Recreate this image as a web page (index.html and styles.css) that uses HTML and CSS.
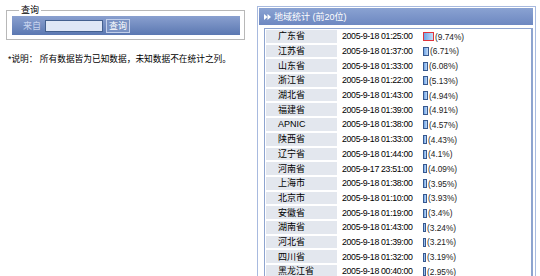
FILE: index.html
```html
<!DOCTYPE html>
<html lang="zh-CN">
<head>
  <meta charset="UTF-8" />
  <title>地域统计</title>
  <link rel="stylesheet" href="styles.css">
</head>
<body>
  <div class="page">
    <div class="side">
      <fieldset class="query">
        <legend>查询</legend>
        <div class="query-bar">
          <span class="query-label">来自</span>
          <input type="text" class="query-input" />
          <button class="query-btn">查询</button>
        </div>
      </fieldset>
      <p class="note">*说明：&nbsp;所有数据皆为已知数据，未知数据不在统计之列。</p>
    </div>

    <div class="panel">
      <div class="panel-head">
        <svg class="head-icon" width="7" height="6" viewBox="0 0 7 6">
          <polygon points="0,0 3.5,3 0,6" fill="#fff"/>
          <polygon points="3.5,0 7,3 3.5,6" fill="#fff"/>
        </svg>
        地域统计 (前20位)
      </div>
      <div class="panel-body">
        <table class="stats" id="stats"></table>
      </div>
    </div>
  </div>

<script>
  const ROWS = [
    ["广东省", "2005-9-18 01:25:00", 11, "9.74%", true],
    ["江苏省", "2005-9-18 01:37:00", 6, "6.71%"],
    ["山东省", "2005-9-18 01:33:00", 5, "6.08%"],
    ["浙江省", "2005-9-18 01:22:00", 5, "5.13%"],
    ["湖北省", "2005-9-18 01:43:00", 5, "4.94%"],
    ["福建省", "2005-9-18 01:39:00", 5, "4.91%"],
    ["APNIC", "2005-9-18 01:38:00", 5, "4.57%"],
    ["陕西省", "2005-9-18 01:33:00", 4, "4.43%"],
    ["辽宁省", "2005-9-18 01:44:00", 4, "4.1%"],
    ["河南省", "2005-9-17 23:51:00", 4, "4.09%"],
    ["上海市", "2005-9-18 01:38:00", 4, "3.95%"],
    ["北京市", "2005-9-18 01:10:00", 4, "3.93%"],
    ["安徽省", "2005-9-18 01:19:00", 4, "3.4%"],
    ["湖南省", "2005-9-18 01:43:00", 3, "3.24%"],
    ["河北省", "2005-9-18 01:39:00", 3, "3.21%"],
    ["四川省", "2005-9-18 01:32:00", 3, "3.19%"],
    ["黑龙江省", "2005-9-18 00:40:00", 3, "2.95%"]
  ];

  const table = document.getElementById("stats");
  ROWS.forEach(([name, time, w, pct, top]) => {
    const tr = document.createElement("tr");
    tr.innerHTML =
      `<td class="c-name">${name}</td>` +
      `<td class="c-time">${time}</td>` +
      `<td class="c-bar"><span class="bar${top ? " bar-top" : ""}" style="width:${w}px"></span>` +
      `<span class="pct">(${pct})</span></td>`;
    table.appendChild(tr);
  });
</script>
</body>
</html>
```

FILE: styles.css
```css
body {
  margin: 0;
  background: #fff;
  color: #000;
  font-family: "Liberation Sans", "Noto Sans CJK SC", sans-serif;
  font-size: 9px;
}

.page {
  display: flex;
  align-items: flex-start;
}

.side {
  width: 251px;
  flex-shrink: 0;
}

/* query box */
.query {
  margin: 6px 0 0 6px;
  width: 239px;
  box-sizing: border-box;
  border: 1px solid #b8b8b8;
  padding: 1px 4px 4px 5px;
}

.query legend {
  padding: 0 2px;
  margin-left: 7px;
  font-size: 9px;
  line-height: 9px;
}

.query-bar {
  display: flex;
  align-items: center;
  height: 19px;
  background: linear-gradient(#8aa0cf, #5b78b2);
}

.query-label {
  color: #c9d5f0;
  margin: 0 4px 0 11px;
}

.query-input {
  width: 58px;
  height: 12px;
  box-sizing: border-box;
  border: 1px solid #44608f;
  background: #dfe7f6;
  padding: 0;
  margin: 0;
}

.query-btn {
  margin-left: 3px;
  height: 14px;
  width: 24px;
  padding: 0;
  border: 1px solid #c3d0ea;
  background: #7a92c3;
  color: #fff;
  font-family: inherit;
  font-size: 9px;
  line-height: 12px;
}

.note {
  margin: 12px 0 0 8px;
  font-size: 8.7px;
  white-space: nowrap;
}

/* stats panel */
.panel {
  margin-top: 6px;
  margin-left: 6px;
  width: 279px;
  height: 300px;
  box-sizing: border-box;
  border: 1px solid #a8badf;
  padding: 1px 2px 0 1px;
}

.panel-head {
  height: 17px;
  display: flex;
  align-items: center;
  gap: 3px;
  padding-left: 5px;
  background: linear-gradient(#8aa2d2, #6d88c1);
  color: #fff;
  font-size: 9px;
}

.head-icon {
  display: block;
}

.panel-body {
  margin: 3px 0 0 5px;
  height: 260px;
  border: 1px solid #8ea4cf;
  border-right-width: 2px;
}

.stats {
  border-collapse: separate;
  border-spacing: 2px 2px;
  margin: -1px 0 0 -1px;
  line-height: 10px;
}

.stats tr {
  height: 12.7px;
}

.stats td {
  padding: 0;
  white-space: nowrap;
}

.c-name {
  width: 59px;
  padding-left: 12px !important;
  background: #e3e7ee;
}

.c-time {
  padding-left: 3px !important;
  width: 79px;
  font-size: 8.8px;
  letter-spacing: -0.35px;
  color: #000;
}

.c-bar {
  font-size: 8.3px;
}

.bar {
  display: inline-block;
  vertical-align: middle;
  height: 9px;
  box-sizing: border-box;
  border: 1px solid #38598f;
  background: linear-gradient(90deg, #6fa4e6, #c4dcf7);
}

.bar-top {
  border-color: #e0343c;
}

.pct {
  vertical-align: middle;
  margin-left: 1px;
  color: #222;
}
```
